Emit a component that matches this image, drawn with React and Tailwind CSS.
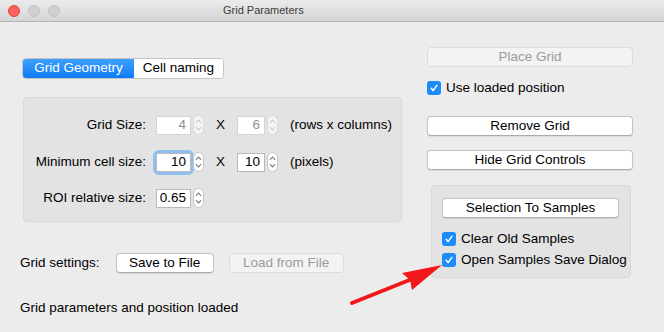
import React from 'react';

const FONT = { fontFamily: '"Liberation Sans", Arial, sans-serif' };

const Stepper = ({ disabled = false }) => {
    const stroke = disabled ? '#c4c4c4' : '#6b6b6b';
    return (
        <div className={`flex h-[20px] w-[11px] flex-col items-center justify-center rounded-full border ${disabled ? 'border-[#dadada] bg-[#f4f4f4]' : 'border-[#c6c6c6] bg-white'}`}>
            <svg width="7" height="16" viewBox="0 0 7 16" fill="none">
                <path d="M1.2 5.5 L3.5 3 L5.8 5.5" stroke={stroke} strokeWidth="1.1" strokeLinecap="round" strokeLinejoin="round" />
                <path d="M1.2 10.5 L3.5 13 L5.8 10.5" stroke={stroke} strokeWidth="1.1" strokeLinecap="round" strokeLinejoin="round" />
            </svg>
        </div>
    );
};

const NumberField = ({ value, width = 'w-[35px]', disabled = false, focused = false }) => (
    <div className="flex items-center gap-[2px]">
        <div className={`rounded-[3px] ${focused ? 'shadow-[0_0_0_3px_#8fbef0]' : ''}`}>
            <div className={`flex h-[19px] ${width} items-center justify-end border bg-white pr-[4px] text-[13.5px] ${disabled ? 'border-[#d4d4d4] text-[#8f8f8f]' : 'border-[#b9b9b9] text-black'}`}>
                {value}
            </div>
        </div>
        <Stepper disabled={disabled} />
    </div>
);

const Button = ({ children, disabled = false, className = '' }) => (
    <div
        className={`flex h-[20px] items-center justify-center whitespace-nowrap rounded-[4px] border text-[13.5px] leading-none ${
            disabled
                ? 'border-[#dcdcdc] bg-[#f3f3f3] text-[#9b9b9b]'
                : 'border-[#c5c5c5] border-b-[#ababab] bg-white text-black shadow-[0_0.5px_1px_rgba(0,0,0,0.08)]'
        } ${className}`}
    >
        {children}
    </div>
);

const Checkbox = ({ label, className = '' }) => (
    <div className={`flex h-[14px] items-center gap-[5px] whitespace-nowrap ${className}`}>
        <div className="flex h-[14px] w-[14px] shrink-0 items-center justify-center rounded-[3px] bg-[#1b8cf9]">
            <svg width="10" height="10" viewBox="0 0 10 10" fill="none">
                <path d="M2.2 5.3 L4.1 7.6 L7.9 2.4" stroke="white" strokeWidth="1.5" strokeLinecap="round" strokeLinejoin="round" />
            </svg>
        </div>
        <span className="text-[13.5px] leading-none text-black">{label}</span>
    </div>
);

const FieldRow = ({ label, children, className = '' }) => (
    <div className={`flex h-[22px] items-center ${className}`}>
        <div className="w-[122px] whitespace-nowrap text-right text-[13.5px] text-black">{label}</div>
        <div className="ml-[10px] flex items-center">{children}</div>
    </div>
);

export default function App() {
    return (
        <div className="relative h-[332px] w-[664px] overflow-hidden bg-[#ececec]" style={FONT}>
            <div className="flex h-[22px] items-center border-b border-[#b4b4b4] bg-gradient-to-b from-[#ebebeb] to-[#d5d5d5]">
                <div className="ml-[8px] flex gap-[8px]">
                    <div className="h-[12px] w-[12px] rounded-full border border-[#e0443e] bg-[#fc605c]" />
                    <div className="h-[12px] w-[12px] rounded-full border border-[#c4c4c4] bg-[#d0d0d0]" />
                    <div className="h-[12px] w-[12px] rounded-full border border-[#c4c4c4] bg-[#d0d0d0]" />
                </div>
                <div className="ml-[163px] text-[11px] text-[#3c3c3c]">Grid Parameters</div>
            </div>

            <div className="flex px-[20px]">
                <div className="flex w-[382px] flex-col">
                    <div className="ml-[2px] mt-[36px] flex h-[21px] w-[202px] overflow-hidden rounded-[4px] border border-[#c4c4c4] text-[13.5px]">
                        <div className="flex w-[111px] items-center justify-center bg-gradient-to-b from-[#3da0ff] to-[#0a7af5] text-white">Grid Geometry</div>
                        <div className="flex flex-1 items-center justify-center bg-white text-black">Cell naming</div>
                    </div>

                    <div className="ml-[3px] mt-[18px] flex h-[125px] w-[379px] flex-col rounded-[4px] border border-[#d8d8d8] bg-[#e3e3e3]">
                        <FieldRow label="Grid Size:" className="mt-[16px]">
                            <NumberField value="4" disabled />
                            <span className="ml-[12px] text-[13.5px] text-black">X</span>
                            <div className="ml-[12px]">
                                <NumberField value="6" width="w-[28px]" disabled />
                            </div>
                            <span className="ml-[12px] whitespace-nowrap text-[13.5px] text-black">(rows x columns)</span>
                        </FieldRow>
                        <FieldRow label="Minimum cell size:" className="mt-[15px]">
                            <NumberField value="10" focused />
                            <span className="ml-[12px] text-[13.5px] text-black">X</span>
                            <div className="ml-[12px]">
                                <NumberField value="10" width="w-[28px]" />
                            </div>
                            <span className="ml-[12px] text-[13.5px] text-black">(pixels)</span>
                        </FieldRow>
                        <FieldRow label="ROI relative size:" className="mt-[14px]">
                            <NumberField value="0.65" />
                        </FieldRow>
                    </div>

                    <div className="mt-[31px] flex h-[20px] items-center">
                        <span className="whitespace-nowrap text-[13.5px] text-black">Grid settings:</span>
                        <Button className="ml-[16px] w-[98px]">Save to File</Button>
                        <Button disabled className="ml-[15px] w-[115px]">Load from File</Button>
                    </div>

                    <div className="mt-[27px] whitespace-nowrap text-[13.5px] leading-[16px] text-black">Grid parameters and position loaded</div>
                </div>

                <div className="ml-[25px] flex w-[206px] flex-col">
                    <Button disabled className="mt-[25px]">Place Grid</Button>
                    <Checkbox label="Use loaded position" className="mt-[14px]" />
                    <Button className="mt-[21px]">Remove Grid</Button>
                    <Button className="mt-[14px]">Hide Grid Controls</Button>

                    <div className="ml-[4px] mt-[15px] flex h-[93px] w-[200px] flex-col rounded-[4px] border border-[#d8d8d8] bg-[#e3e3e3] pl-[10px] pr-[11px] pt-[12px]">
                        <Button>Selection To Samples</Button>
                        <Checkbox label="Clear Old Samples" className="mt-[14px]" />
                        <Checkbox label="Open Samples Save Dialog" className="mt-[7px]" />
                    </div>
                </div>
            </div>

            <svg className="pointer-events-none absolute left-0 top-0" width="664" height="332" viewBox="0 0 664 332">
                <line x1="352" y1="303" x2="412" y2="279" stroke="#f2171b" strokeWidth="4" strokeLinecap="round" />
                <polygon points="442,265 402,273 410,280 412,290" fill="#f2171b" />
            </svg>
        </div>
    );
}
